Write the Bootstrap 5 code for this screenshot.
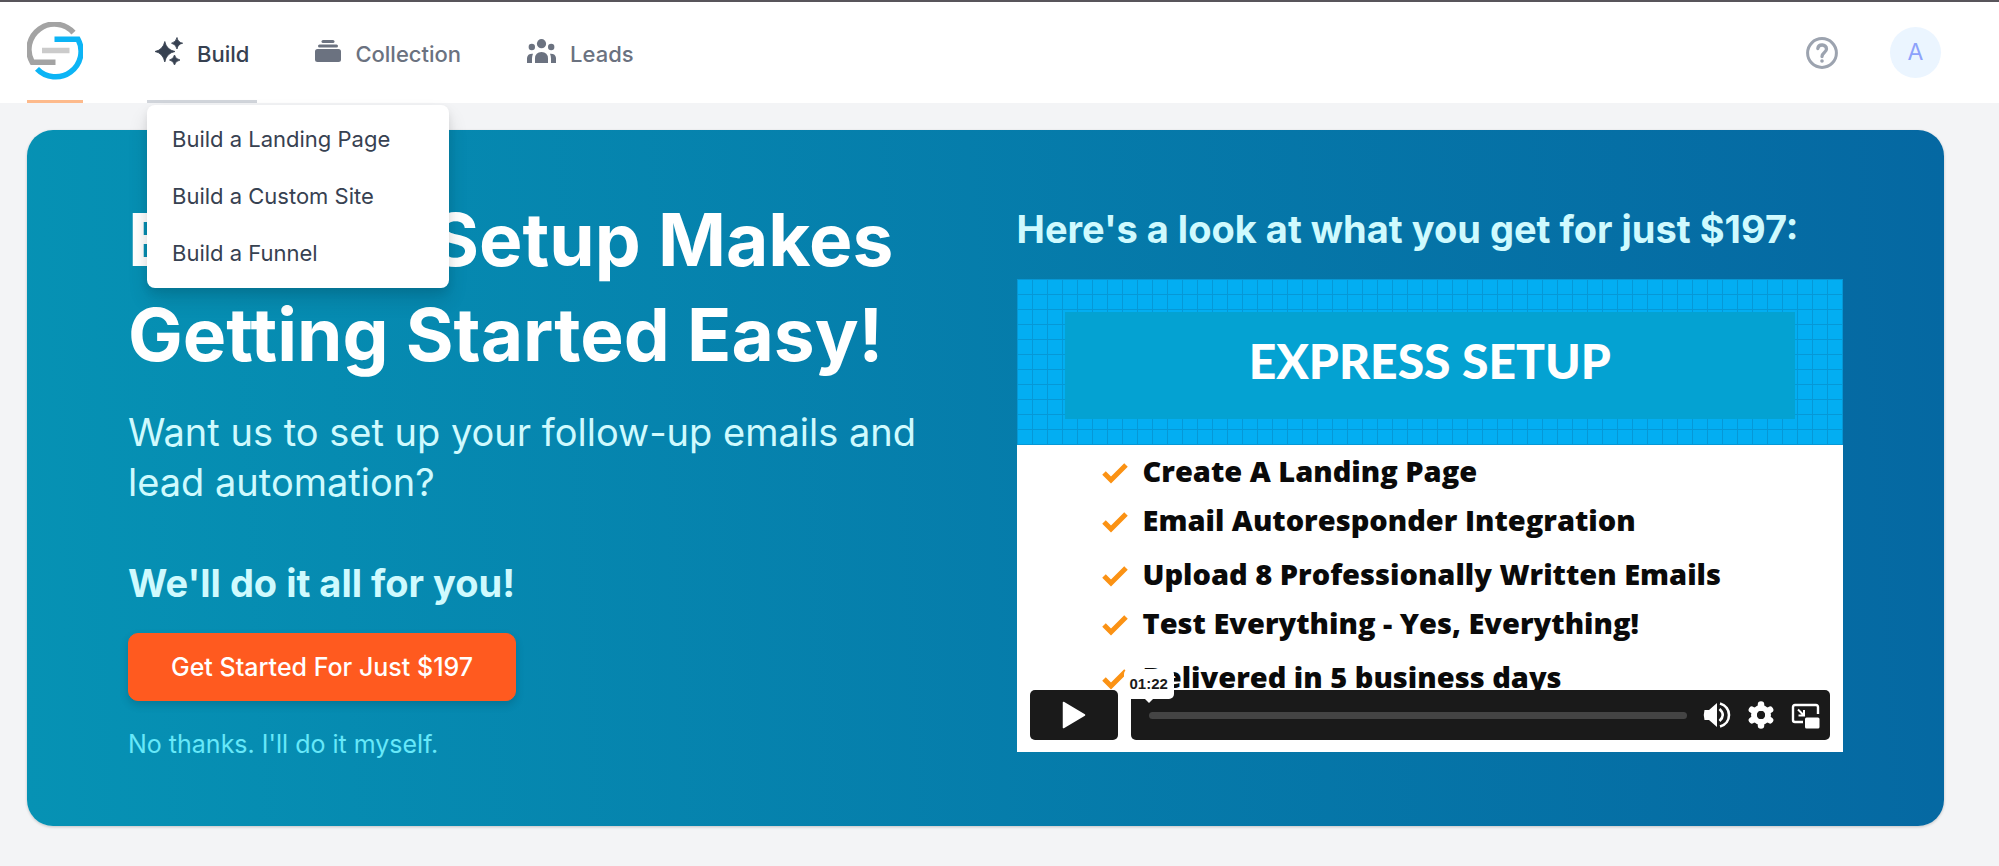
<!DOCTYPE html>
<html lang="en">
<head>
<meta charset="utf-8">
<meta name="viewport" content="width=device-width, initial-scale=1">
<title>Express Setup</title>
<link href="https://cdn.jsdelivr.net/npm/bootstrap@5.3.0/dist/css/bootstrap.min.css" rel="stylesheet">
<style>
  body { font-family: Inter, "Liberation Sans", sans-serif; background: #f3f4f6; color: #374151; }

  /* Top bar */
  .topbar { border-top: 2px solid #58555b; background: #fff; padding: 0 58px 0 27px; }
  .brand-link { padding: 20px 0 18px; border-bottom: 3px solid #fdba8c; }
  .menu-list { gap: 50px; margin-left: 64px; }
  .menu-link { gap: 14px; padding: 6px 8px 0; font-size: 22px; line-height: 32px; font-weight: 500; color: #6b7280; background: none; border: 0; border-bottom: 3px solid transparent; text-decoration: none; }
  .menu-link.active { color: #374151; border-bottom-color: #d1d5db; }
  .menu-link svg { margin-top: -6px; }
  .build-menu { --bs-dropdown-min-width: 302px; --bs-dropdown-padding-y: 6px; --bs-dropdown-padding-x: 0; --bs-dropdown-border-width: 0; --bs-dropdown-border-radius: 8px; --bs-dropdown-link-color: #374151; --bs-dropdown-item-padding-x: 25px; --bs-dropdown-item-padding-y: 13px; font-size: 22px; line-height: 31px; box-shadow: 0 12px 20px rgba(0,0,0,.12), 0 4px 8px rgba(0,0,0,.08); top: 100%; left: 0; margin-top: 2px; }
  .help-btn { border: 0; background: none; color: #9ca3af; padding: 0; }
  .avatar { width: 51px; height: 51px; border: 0; background: #ebf5ff; color: #8da2fb; font-size: 23px; font-weight: 400; margin-left: 52px; padding: 0; }

  /* Promo panel */
  .promo { margin: 27px 55px 40px 27px; padding: 62px 101px 64px; border-radius: 26px; background: linear-gradient(87deg, #0692b4, #0568a2); box-shadow: 0 1px 3px rgba(0,0,0,.2); color: #cffafe; }
  .promo-title { font-size: 73px; line-height: 95px; font-weight: 700; color: #fff; margin-bottom: 25px; }
  .promo-lead { font-size: 38px; line-height: 50px; margin-bottom: 51px; }
  .promo-sub { font-size: 38px; line-height: 50px; font-weight: 700; margin-bottom: 25px; }
  .cta { --bs-btn-color: #fff; --bs-btn-bg: #ff5a1f; --bs-btn-border-color: #ff5a1f; --bs-btn-hover-color: #fff; --bs-btn-hover-bg: #e64f18; --bs-btn-font-size: 25px; --bs-btn-line-height: 34px; --bs-btn-font-weight: 500; --bs-btn-padding-x: 42px; --bs-btn-padding-y: 16px; --bs-btn-border-radius: 10px; line-height: 34px; box-shadow: 0 4px 8px rgba(0,0,0,.15); }
  .decline { font-size: 25px; line-height: 36px; color: #67e8f9; text-decoration: none; margin-top: 25px; }

  /* Video */
  .video { background: #fff; color: #0a0a0a; aspect-ratio: 826 / 473; }
  .slide-head { padding: 33px 48px 26px; background-color: #03aef2;
    background-image: linear-gradient(#0698d6 1px, transparent 1px), linear-gradient(90deg, #0698d6 1px, transparent 1px);
    background-size: 15px 15px; }
  .slide-title { background: #04a2d2; color: #fff; font-family: Lato, "Liberation Sans", sans-serif; font-size: 48px; line-height: 97px; padding-bottom: 10px; font-weight: 900; }
  .slide-list { padding: 11px 0 0 85px; font-family: "Open Sans", "Liberation Sans", sans-serif; font-weight: 800; font-size: 29px; line-height: 30px; }
  .slide-list li { gap: 15px; margin-bottom: 19px; }
  .slide-list li:nth-child(even) { margin-bottom: 24px; }
  .slide-list svg { margin-top: 4px; }
  .player { inset: auto 13px 12px 13px; height: 50px; gap: 13px; }
  .player-box { background: #1a1a1a; border-radius: 5px; color: #fff; }
  .play-btn { width: 88px; border: 0; padding: 0; }
  .player-tools { padding: 0 10px 0 18px; gap: 16px; }
  .player-tools button { background: none; border: 0; padding: 0; color: #fff; line-height: 1; }
  .seek { appearance: none; height: 7px; border-radius: 4px; background: #444; margin: 0; min-width: 0; }
  .seek::-webkit-slider-thumb { appearance: none; width: 0; height: 0; }
  .time-tip { left: -7px; bottom: 41px; background: #fff; color: #1a1a1a; font: 700 15px/30px "Liberation Sans", sans-serif; padding: 0 6px; border-radius: 5px; }
  .time-tip::after { content: ""; position: absolute; left: 50%; top: 100%; margin-left: -4px; border: 4px solid transparent; border-top-color: #fff; border-bottom: 0; }
</style>
</head>
<body>
<header class="topbar d-flex align-items-stretch">
  <a class="brand-link d-block" href="#" aria-label="Home">
    <svg class="d-block" width="56" height="60" viewBox="0 0 56 60" fill="none">
      <path d="M46.500 10.700A25.500 25.500 0 0 0 5.300 40.300H28.500" stroke="#a3a3a3" stroke-width="5.500"/>
      <path d="M27.500 17.200H51A25.500 25.500 0 0 1 10 46.800" stroke="#0cb4f5" stroke-width="5.500"/>
      <path d="M15 28.500H42.500" stroke="#cbcbcb" stroke-width="5.500"/>
    </svg>
  </a>
  <nav class="d-flex flex-grow-1" aria-label="Main">
    <ul class="menu-list list-unstyled d-flex mb-0">
      <li class="dropdown d-flex">
        <button class="menu-link active d-flex align-items-center" type="button" data-bs-toggle="dropdown" data-bs-display="static" aria-expanded="true">
          <svg width="28" height="28" viewBox="0 0 28 28" fill="currentColor"><path d="M9.800 4.500Q11.500 12.800 20 14.500Q11.500 16.200 9.800 25Q8 16.200 0 14.500Q8 12.800 9.800 4.500ZM22 .500Q22.800 5.200 27.700 6.200Q22.800 7.200 22 12Q21 7.200 16.500 6.200Q21 5.200 22 .500ZM19.500 18Q20.300 22 25 23Q20.300 24 19.500 28Q18.600 24 14.500 23Q18.600 22 19.500 18Z" stroke="currentColor" stroke-width=".800" stroke-linejoin="round"/></svg>
          Build
        </button>
        <ul class="dropdown-menu build-menu show">
          <li><a class="dropdown-item" href="#">Build a Landing Page</a></li>
          <li><a class="dropdown-item" href="#">Build a Custom Site</a></li>
          <li><a class="dropdown-item" href="#">Build a Funnel</a></li>
        </ul>
      </li>
      <li class="d-flex">
        <a class="menu-link d-flex align-items-center" href="#">
          <svg width="26" height="24" viewBox="0 0 26 24" fill="currentColor"><rect x="6.500" y="1" width="13" height="3" rx="1.500"/><rect x="3" y="5.500" width="20" height="3" rx="1.500"/><rect y="10" width="26" height="13" rx="2.500"/></svg>
          Collection
        </a>
      </li>
      <li class="d-flex">
        <a class="menu-link d-flex align-items-center" href="#">
          <svg width="29" height="24" viewBox="0 0 29 24" fill="currentColor"><circle cx="14.500" cy="4.700" r="4.600"/><circle cx="4.800" cy="8" r="3.200"/><circle cx="24.200" cy="8" r="3.200"/><path d="M8 24V19.500Q8.200 13 14.500 13T21 19.500V24ZM0 24V19Q.500 14.300 6 14.700Q5 17 5 19.500V24ZM29 24V19Q28.500 14.300 23 14.700Q24 17 24 19.500V24Z"/></svg>
          Leads
        </a>
      </li>
    </ul>
  </nav>
  <div class="d-flex align-items-center">
    <button class="help-btn" type="button" aria-label="Help">
      <svg class="d-block" width="32" height="32" viewBox="0 0 32 32" fill="none" stroke="currentColor" stroke-width="3"><circle cx="16" cy="16" r="14.400"/><path d="M11.800 11.500C12.500 6.500 20.500 7 20.500 12C20.500 15.500 16 15.500 16 19.500" stroke-width="3.300" stroke-linecap="round"/><circle cx="16" cy="24" r="1.800" fill="currentColor" stroke="none"/></svg>
    </button>
    <button class="avatar rounded-circle" type="button">A</button>
  </div>
</header>

<main class="promo">
  <div class="row" style="--bs-gutter-x: 62px">
    <section class="col-6">
      <h1 class="promo-title">Express Setup Makes Getting Started Easy!</h1>
      <p class="promo-lead">Want us to set up your follow-up emails and lead automation?</p>
      <h2 class="promo-sub">We'll do it all for you!</h2>
      <button class="btn cta" type="button">Get Started For Just $197</button>
      <div><a class="decline d-inline-block" href="#">No thanks. I'll do it myself.</a></div>
    </section>
    <section class="col-6">
      <h2 class="promo-sub mt-2 pt-1">Here's a look at what you get for just $197:</h2>
      <div class="video position-relative">
        <div class="slide-head">
          <h3 class="slide-title text-center mb-0">EXPRESS SETUP</h3>
        </div>
        <ul class="slide-list list-unstyled mb-0">
          <li class="d-flex align-items-center"><svg width="26" height="22" viewBox="0 0 26 22" fill="none" stroke="#fb9214" stroke-width="5"><path d="M2 11L9 18L24 3"/></svg>Create A Landing Page</li>
          <li class="d-flex align-items-center"><svg width="26" height="22" viewBox="0 0 26 22" fill="none" stroke="#fb9214" stroke-width="5"><path d="M2 11L9 18L24 3"/></svg>Email Autoresponder Integration</li>
          <li class="d-flex align-items-center"><svg width="26" height="22" viewBox="0 0 26 22" fill="none" stroke="#fb9214" stroke-width="5"><path d="M2 11L9 18L24 3"/></svg>Upload 8 Professionally Written Emails</li>
          <li class="d-flex align-items-center"><svg width="26" height="22" viewBox="0 0 26 22" fill="none" stroke="#fb9214" stroke-width="5"><path d="M2 11L9 18L24 3"/></svg>Test Everything - Yes, Everything!</li>
          <li class="d-flex align-items-center mb-0"><svg width="26" height="22" viewBox="0 0 26 22" fill="none" stroke="#fb9214" stroke-width="5"><path d="M2 11L9 18L24 3"/></svg>Delivered in 5 business days</li>
        </ul>
        <div class="player position-absolute d-flex">
          <button class="player-box play-btn d-flex align-items-center justify-content-center" type="button" aria-label="Play">
            <svg width="24" height="28" viewBox="0 0 24 28" fill="currentColor"><path d="M1.500 1.500L22.500 14L1.500 26.500Z" stroke="currentColor" stroke-width="1.500" stroke-linejoin="round"/></svg>
          </button>
          <div class="player-box player-tools position-relative flex-grow-1 d-flex align-items-center">
            <output class="time-tip position-absolute">01:22</output>
            <input class="seek flex-grow-1" type="range" min="0" max="100" value="0" aria-label="Seek">
            <button type="button" aria-label="Volume"><svg width="28" height="28" viewBox="0 0 28 28" fill="none" stroke="currentColor" stroke-width="2.600"><path d="M1.500 9H6L14 2V26L6 19H1.500Q0 14 1.500 9Z" fill="currentColor" stroke="none"/><path d="M16.500 8Q23 14 16.500 20M17 2.500C29 6 29 22 17 25.500"/></svg></button>
            <button type="button" aria-label="Settings"><svg width="28" height="28" viewBox="0 0 28 28"><circle cx="14" cy="14" r="7" fill="none" stroke="currentColor" stroke-width="6"/><path d="M14 3.500V7M14 21V24.500M4.900 8.750L8 10.500M20 17.500L23.100 19.250M4.900 19.250L8 17.500M20 10.500L23.100 8.750" stroke="currentColor" stroke-width="6.500" stroke-linecap="round"/><circle cx="14" cy="14" r="4" fill="#1a1a1a"/></svg></button>
            <button type="button" aria-label="Picture in picture"><svg width="29" height="28" viewBox="0 0 29 28" fill="none" stroke="currentColor" stroke-width="2.400"><path d="M27 13V6Q27 4 25 4H4Q2 4 2 6V19Q2 21 4 21H12"/><path d="M7 8.500L12.500 14M13 9V14.500H7.500" stroke-width="2"/><rect x="14" y="16.500" width="14.500" height="11" rx="1.500" fill="currentColor" stroke="none"/></svg></button>
          </div>
        </div>
      </div>
    </section>
  </div>
</main>
<script src="https://cdn.jsdelivr.net/npm/bootstrap@5.3.0/dist/js/bootstrap.bundle.min.js"></script>
</body>
</html>
